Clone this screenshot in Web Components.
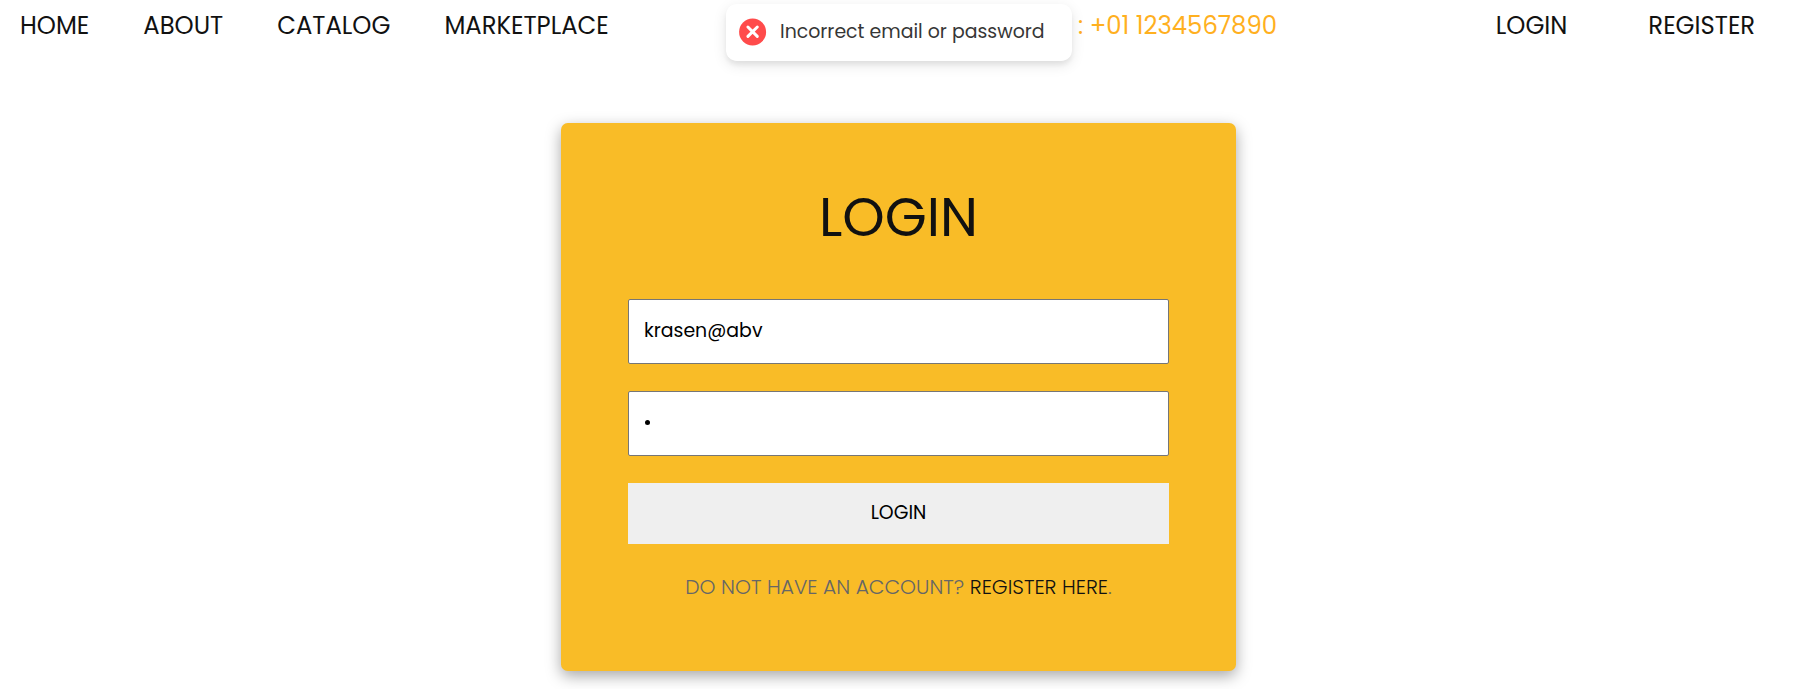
<!DOCTYPE html>
<html lang="en">
<head>
<meta charset="utf-8">
<title>Login</title>
<style>
html,body{margin:0;height:100%;background:#fff}
body{font-family:Poppins,Inter,"Open Sans",sans-serif;font-weight:400;color:#111;overflow:hidden}
</style>
</head>
<body>
<app-page></app-page>
<script>
function define(name, html, setup) {
  const template = document.createElement('template');
  template.innerHTML = html;
  customElements.define(name, class extends HTMLElement {
    constructor() {
      super();
      this.attachShadow({ mode: 'open' }).append(template.content.cloneNode(true));
    }
    connectedCallback() { if (setup) setup(this, this.shadowRoot); }
  });
}

define('site-nav', `
<style>
:host{display:flex;height:53px;font-size:24.3px;line-height:52px;padding:0 46px 0 20px;box-sizing:border-box;color:#111;white-space:nowrap}
.left{display:flex;gap:54px;flex:none;width:1058px}
.phone{color:#ffb01f;flex:none;width:417.8px}
.right{display:flex;gap:81px}
a{color:inherit;text-decoration:none;flex:none}
</style>
<div class="left"><a>HOME</a><a>ABOUT</a><a>CATALOG</a><a>MARKETPLACE</a></div>
<div class="phone">: +01 1234567890</div>
<div class="right"><a>LOGIN</a><a>REGISTER</a></div>`);

define('toast-message', `
<style>
:host{display:flex;align-items:center;box-sizing:border-box;width:346px;height:57px;padding:0 13px;background:#fff;border-radius:10.8px;
box-shadow:0 4px 13.5px rgba(0,0,0,.1),0 4px 4px rgba(0,0,0,.05);color:#363636;font-size:18.9px;line-height:28px;white-space:nowrap}
svg{flex:none;width:28px;height:28px;margin:-1px 13px 0 0}
span{margin-top:-1px}
</style>
<svg viewBox="0 0 28 28"><circle cx="13.6" cy="14" r="13.5" fill="#ff4b4b"/><path d="M8.9 9l9.4 9.4M18.3 9l-9.4 9.4" stroke="#fff" stroke-width="3" stroke-linecap="round"/></svg>
<span><slot></slot></span>`);

define('text-field', `
<style>
:host{display:block;height:65px}
input{display:block;box-sizing:border-box;width:100%;height:65px;margin:0;padding:0 15px 2px;border:1px solid #767676;border-radius:2px;
background:#fff;color:#000;font:inherit;font-size:18.9px;outline:0}
.dot{display:flex;align-items:center;box-sizing:border-box;height:65px;padding:0 16px 2px;border:1px solid #767676;border-radius:2px;background:#fff}
.dot i{width:5px;height:5px;border-radius:50%;background:#000}
</style>`, (host, root) => {
  if (host.getAttribute('type') === 'password') {
    const box = document.createElement('div');
    box.className = 'dot';
    for (const _ of host.getAttribute('value')) box.append(document.createElement('i'));
    root.append(box);
  } else {
    const input = document.createElement('input');
    input.value = host.getAttribute('value');
    root.append(input);
  }
});

define('submit-button', `
<style>
:host{display:block}
button{display:block;width:100%;height:61px;margin:0;padding:0 0 2px;border:0;background:#efefef;color:#000;font:inherit;font-size:18.9px}
</style>
<button><slot></slot></button>`);

define('login-card', `
<style>
:host{display:flex;flex-direction:column;box-sizing:border-box;width:675px;height:548px;padding:54px 67px 0;background:#f9bc27;border-radius:6.75px;
box-shadow:0 5px 15px rgba(0,0,0,.35)}
h1{margin:0;height:80px;line-height:80px;font-size:54px;font-weight:400;text-align:center;color:#111}
form{display:grid;gap:27px;margin-top:42px}
p{margin:26px 0 0;height:34px;line-height:34px;font-size:20.25px;font-weight:300;text-align:center;color:#666;white-space:nowrap}
b{font-weight:300;color:#111}
</style>
<h1>LOGIN</h1>
<form>
<text-field value="krasen@abv"></text-field>
<text-field type="password" value="1"></text-field>
<submit-button>LOGIN</submit-button>
</form>
<p>DO NOT HAVE AN ACCOUNT? <b>REGISTER HERE</b>.</p>`);

define('app-page', `
<style>
:host{display:block;position:relative;height:689px}
main{display:flex;justify-content:center;padding:70px 4px 0 0}
toast-message{position:absolute;left:726px;top:4px}
</style>
<site-nav></site-nav>
<main><login-card></login-card></main>
<toast-message>Incorrect email or password</toast-message>`);
</script>
</body>
</html>
